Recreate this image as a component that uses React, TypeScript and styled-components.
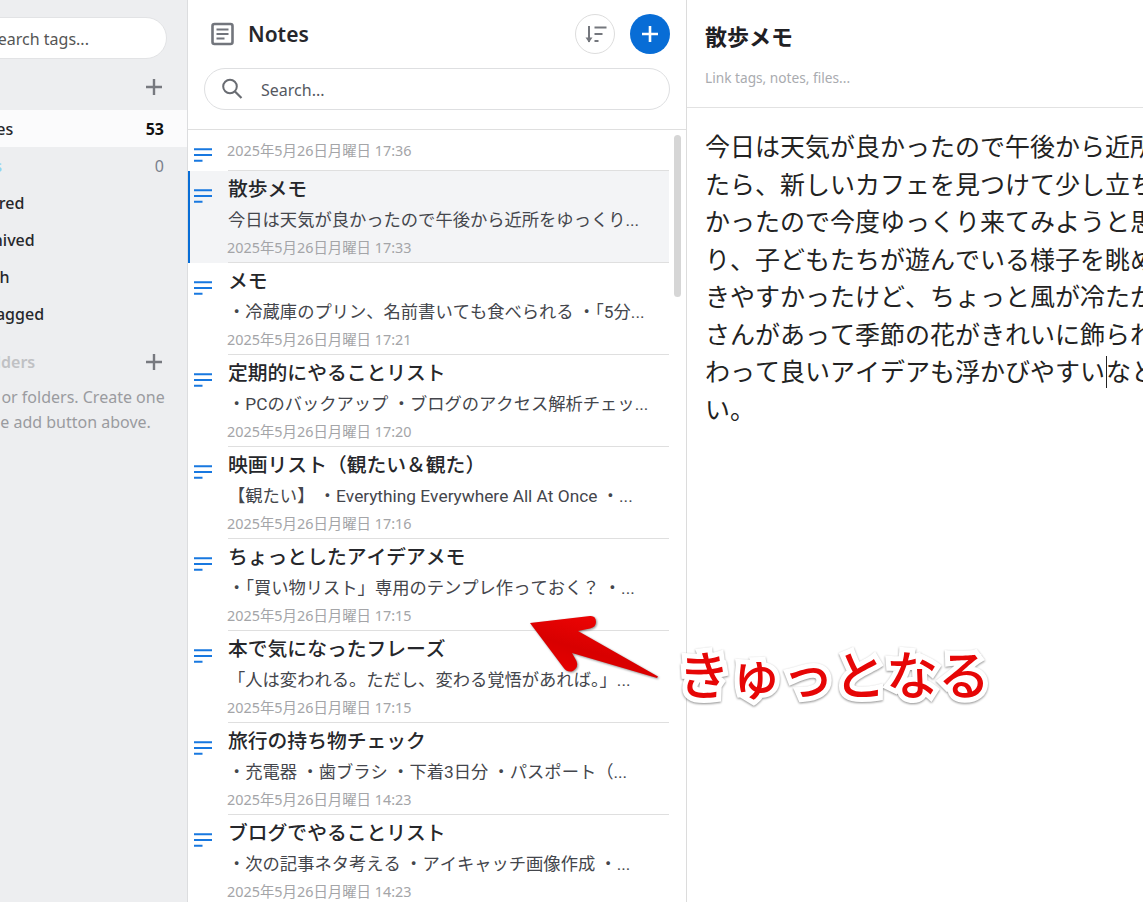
import React from 'react';
import styled, { createGlobalStyle } from 'styled-components';

const FONT = `"Noto Sans", "Noto Sans CJK JP", sans-serif`;

const Global = createGlobalStyle`
  html, body { margin: 0; padding: 0; height: 100%; overflow: hidden; background: #fff; }
  body { font-family: ${FONT}; color: #222; }
  #root { height: 100%; }
`;

const Shell = styled.div`
  position: relative;
  display: flex;
  width: 1143px;
  height: 902px;
  overflow: hidden;
`;

/* ---------- tags sidebar (its left part is cut off by the window) ---------- */
const Sidebar = styled.aside`
  flex: 0 0 188px;
  height: 100%;
  box-sizing: border-box;
  background: #edeef0;
  border-right: 1px solid #dcdddf;
  overflow: hidden;
`;
const SidebarInner = styled.div`
  width: 247px;
  margin-left: -60px;
  padding-top: 17px;
`;
const TagSearch = styled.div`
  box-sizing: border-box;
  width: 207px;
  height: 42px;
  margin-left: 20px;
  padding: 2px 0 0 28px;
  display: flex;
  align-items: center;
  background: #fff;
  border: 1px solid #e2e3e5;
  border-radius: 21px;
  font-size: 16px;
  color: #555;
`;
const SectionHead = styled.div<{ $top: number }>`
  display: flex;
  align-items: center;
  justify-content: space-between;
  height: 26px;
  margin-top: ${(p) => p.$top}px;
  padding: 0 24px 0 38px;
  font-size: 16px;
  font-weight: 600;
  color: #c0c1c4;
`;
const PlusOnly = styled(SectionHead)`
  justify-content: flex-end;
`;
const ViewRow = styled.div<{ $active?: boolean }>`
  display: flex;
  align-items: center;
  justify-content: space-between;
  height: 37px;
  padding: 0 23px 0 28px;
  font-size: 16px;
  font-weight: 500;
  color: #26272b;
  background: ${(p) => (p.$active ? '#fbfbfc' : 'transparent')};
`;
const ViewName = styled.span<{ $tint?: boolean }>`
  color: ${(p) => (p.$tint ? '#8fd3f4' : 'inherit')};
`;
const Count = styled.span<{ $strong?: boolean }>`
  font-weight: ${(p) => (p.$strong ? 700 : 400)};
  color: ${(p) => (p.$strong ? '#111' : '#7a808c')};
`;
const Views = styled.div`
  margin-top: 10px;
`;
const EmptyNote = styled.p`
  margin: 10px 0 0 -1px;
  font-size: 16px;
  line-height: 25px;
  color: #9a9b9f;
  white-space: nowrap;
`;

/* ---------- notes list ---------- */
const NotesColumn = styled.section`
  position: relative;
  flex: 0 0 499px;
  box-sizing: border-box;
  height: 100%;
  border-right: 1px solid #dcdcdc;
  overflow: hidden;
  background: #fff;
`;
const NotesHeader = styled.header`
  box-sizing: border-box;
  height: 130px;
  padding: 14px 16px 0 16px;
  border-bottom: 1px solid #dfdfdf;
`;
const HeaderTop = styled.div`
  display: flex;
  align-items: center;
  height: 40px;
`;
const HeaderIcon = styled.svg`
  width: 24px;
  height: 24px;
  margin-left: 6px;
  flex: none;
`;
const HeaderTitle = styled.h1`
  flex: 1;
  margin: 0 0 0 14px;
  font-size: 21px;
  font-weight: 600;
  color: #26272b;
`;
const RoundButton = styled.button<{ $primary?: boolean }>`
  box-sizing: border-box;
  width: 40px;
  height: 40px;
  padding: 0;
  margin-left: 15px;
  display: flex;
  align-items: center;
  justify-content: center;
  border-radius: 50%;
  border: ${(p) => (p.$primary ? 'none' : '1px solid #dddddd')};
  background: ${(p) => (p.$primary ? '#086dd6' : '#fff')};
`;
const SearchBox = styled.div`
  box-sizing: border-box;
  display: flex;
  align-items: center;
  height: 42px;
  margin-top: 14px;
  padding: 2px 0 0 15px;
  border: 1px solid #dedfe1;
  border-radius: 21px;
  font-size: 16px;
  color: #55585f;
`;
const SearchGlyph = styled.svg`
  width: 24px;
  height: 24px;
  margin: -2px 17px 0 0;
`;
const List = styled.div`
  padding-right: 17px;
`;
const NoteRow = styled.article<{ $selected?: boolean }>`
  display: flex;
  background: ${(p) => (p.$selected ? '#f3f4f6' : 'transparent')};
  box-shadow: ${(p) => (p.$selected ? 'inset 2px 0 0 #086dd6' : 'none')};
`;
const NoteGlyph = styled.svg`
  flex: 0 0 18px;
  width: 18px;
  height: 14px;
  margin: 18px 16px 0 6px;
`;
const NoteBody = styled.div<{ $compact?: boolean }>`
  flex: 1;
  min-width: 0;
  box-sizing: border-box;
  height: ${(p) => (p.$compact ? 41 : 92)}px;
  padding-top: ${(p) => (p.$compact ? 11 : 4)}px;
  border-bottom: 1px solid #dfdfdf;
`;
const NoteTitle = styled.h2`
  margin: 0;
  font-size: 19.8px;
  line-height: 28px;
  font-weight: 500;
  font-kerning: none;
  color: #26272b;
  white-space: nowrap;
`;
const NotePreview = styled.p`
  margin: 5px 0 0;
  font-family: Roboto, "Noto Sans CJK JP", sans-serif;
  font-size: 17.3px;
  line-height: 25px;
  font-kerning: none;
  color: #44464c;
  white-space: nowrap;
  overflow: hidden;
`;
const NoteDate = styled.time`
  display: block;
  margin: 5px 0 0 -1px;
  font-size: 14.4px;
  line-height: 20px;
  color: #a4a5a8;
  white-space: nowrap;
`;
const CompactDate = styled(NoteDate)`
  margin-top: 0;
`;
const ScrollThumb = styled.div`
  position: absolute;
  left: 486px;
  top: 135px;
  width: 7px;
  height: 162px;
  border-radius: 4px;
  background: #d6d6d6;
`;

/* ---------- editor ---------- */
const Editor = styled.main`
  flex: 1;
  min-width: 0;
  height: 100%;
  overflow: hidden;
  background: #fff;
`;
const EditorHeader = styled.header`
  box-sizing: border-box;
  height: 108px;
  padding: 21px 18px 0;
  border-bottom: 1px solid #e2e2e2;
`;
const EditorTitle = styled.h2`
  margin: 0;
  font-size: 22px;
  line-height: 30px;
  font-weight: 700;
  font-kerning: none;
  color: #1f2024;
`;
const LinkHint = styled.div`
  margin-top: 17px;
  font-size: 13.7px;
  line-height: 20px;
  color: #a9abaf;
`;
const EditorText = styled.div`
  padding: 20px 18px 0;
  font-size: 25px;
  line-height: 37.5px;
  font-kerning: none;
  color: #222;
`;
const TextLine = styled.div`
  white-space: nowrap;
`;
const Caret = styled.span`
  display: inline-block;
  width: 0;
  height: 32px;
  margin: 0 -1px 0 1px;
  border-left: 1px solid #222;
  vertical-align: -7px;
`;

/* ---------- annotation over the screenshot ---------- */
const ArrowMark = styled.svg`
  position: absolute;
  left: 520px;
  top: 605px;
  width: 150px;
  height: 85px;
  filter: drop-shadow(1px 1px 1px rgba(0, 0, 0, 0.45));
`;
const Callout = styled.div`
  position: absolute;
  left: 678px;
  top: 638px;
  font-size: 52px;
  line-height: 74px;
  font-weight: 500;
  font-kerning: none;
  white-space: nowrap;
  color: #e60606;
  -webkit-text-stroke: 10px #fff;
  paint-order: stroke fill;
  filter: drop-shadow(0 1px 1px rgba(0, 0, 0, 0.45));
`;

const PlusGlyph = ({ color, size, weight }: { color: string; size: number; weight: number }) => (
  <svg width={size} height={size} viewBox="0 0 18 18" fill="none" aria-hidden="true">
    <path d="M9 1v16M1 9h16" stroke={color} strokeWidth={weight} />
  </svg>
);

const LinesIcon = () => (
  <NoteGlyph viewBox="0 0 18 14" fill="none" aria-hidden="true">
    <path d="M0 1.200h18M0 7h18M0 12.800h8.500" stroke="#1878e0" strokeWidth="2" />
  </NoteGlyph>
);

const notes = [
  { title: '散歩メモ', preview: '今日は天気が良かったので午後から近所をゆっくり...', date: '2025年5月26日月曜日 17:33', selected: true },
  { title: 'メモ', preview: '・冷蔵庫のプリン、名前書いても食べられる ・「5分...', date: '2025年5月26日月曜日 17:21' },
  { title: '定期的にやることリスト', preview: '・PCのバックアップ ・ブログのアクセス解析チェッ...', date: '2025年5月26日月曜日 17:20' },
  { title: '映画リスト（観たい＆観た）', preview: '【観たい】 ・Everything Everywhere All At Once ・...', date: '2025年5月26日月曜日 17:16' },
  { title: 'ちょっとしたアイデアメモ', preview: '・「買い物リスト」専用のテンプレ作っておく？ ・...', date: '2025年5月26日月曜日 17:15' },
  { title: '本で気になったフレーズ', preview: '「人は変われる。ただし、変わる覚悟があれば。」...', date: '2025年5月26日月曜日 17:15' },
  { title: '旅行の持ち物チェック', preview: '・充電器 ・歯ブラシ ・下着3日分 ・パスポート（...', date: '2025年5月26日月曜日 14:23' },
  { title: 'ブログでやることリスト', preview: '・次の記事ネタ考える ・アイキャッチ画像作成 ・...', date: '2025年5月26日月曜日 14:23' },
];

const views = [
  { name: 'Notes', count: '53', active: true },
  { name: 'Files', count: '0', tint: true },
  { name: 'Starred' },
  { name: 'Archived' },
  { name: 'Trash' },
  { name: 'Untagged' },
];

export default function App() {
  return (
    <Shell lang="ja">
      <Global />
      <Sidebar>
        <SidebarInner>
          <TagSearch>Search tags...</TagSearch>
          <PlusOnly $top={15}>
            <PlusGlyph color="#77797f" size={18} weight={2.4} />
          </PlusOnly>
          <Views>
            {views.map((v) => (
              <ViewRow key={v.name} $active={v.active}>
                <ViewName $tint={v.tint}>{v.name}</ViewName>
                {v.count && <Count $strong={v.active}>{v.count}</Count>}
              </ViewRow>
            ))}
          </Views>
          <SectionHead $top={17}>
            <span>Folders</span>
            <PlusGlyph color="#77797f" size={18} weight={2.4} />
          </SectionHead>
          <EmptyNote>
            No tags or folders. Create one
            <br />
            using the add button above.
          </EmptyNote>
        </SidebarInner>
      </Sidebar>

      <NotesColumn>
        <NotesHeader>
          <HeaderTop>
            <HeaderIcon viewBox="0 0 24 24" fill="none" aria-hidden="true">
              <rect x="2.500" y="2" width="20" height="20" rx="2" stroke="#72757c" strokeWidth="2.600" />
              <path d="M6.500 7.500h12M6.500 12h12M6.500 16.500h8" stroke="#72757c" strokeWidth="2" />
            </HeaderIcon>
            <HeaderTitle>Notes</HeaderTitle>
            <RoundButton aria-label="Sort">
              <svg width="24" height="24" viewBox="0 0 24 24" fill="none" aria-hidden="true">
                <path d="M6 4v16" stroke="#74777d" strokeWidth="2" />
                <path d="M2.500 15.500 6 20.500l3.500-5z" fill="#74777d" />
                <path d="M11.500 5.500h12M11.500 12h8M11.500 19h4" stroke="#74777d" strokeWidth="2" />
              </svg>
            </RoundButton>
            <RoundButton $primary aria-label="Add note">
              <PlusGlyph color="#fff" size={18} weight={2.6} />
            </RoundButton>
          </HeaderTop>
          <SearchBox>
            <SearchGlyph viewBox="0 0 24 24" fill="none" aria-hidden="true">
              <circle cx="10" cy="9.500" r="6.800" stroke="#696c72" strokeWidth="2" />
              <path d="m15 14.500 6.500 6.500" stroke="#696c72" strokeWidth="2.200" />
            </SearchGlyph>
            Search...
          </SearchBox>
        </NotesHeader>
        <List>
          <NoteRow>
            <LinesIcon />
            <NoteBody $compact>
              <CompactDate>2025年5月26日月曜日 17:36</CompactDate>
            </NoteBody>
          </NoteRow>
          {notes.map((n) => (
            <NoteRow key={n.title} $selected={n.selected}>
              <LinesIcon />
              <NoteBody>
                <NoteTitle>{n.title}</NoteTitle>
                <NotePreview>{n.preview}</NotePreview>
                <NoteDate>{n.date}</NoteDate>
              </NoteBody>
            </NoteRow>
          ))}
        </List>
        <ScrollThumb />
      </NotesColumn>

      <Editor>
        <EditorHeader>
          <EditorTitle>散歩メモ</EditorTitle>
          <LinkHint>Link tags, notes, files...</LinkHint>
        </EditorHeader>
        <EditorText>
          <TextLine>今日は天気が良かったので午後から近所をゆっくり</TextLine>
          <TextLine>たら、新しいカフェを見つけて少し立ち寄ってみた</TextLine>
          <TextLine>かったので今度ゆっくり来てみようと思った。公園</TextLine>
          <TextLine>り、子どもたちが遊んでいる様子を眺めながら歩く</TextLine>
          <TextLine>きやすかったけど、ちょっと風が冷たかった。お花</TextLine>
          <TextLine>さんがあって季節の花がきれいに飾られていて</TextLine>
          <TextLine>わって良いアイデアも浮かびやすい<Caret />なと思う。</TextLine>
          <TextLine>い。</TextLine>
        </EditorText>
      </Editor>

      <ArrowMark viewBox="0 0 150 85" aria-hidden="true">
        <defs>
          <linearGradient id="arrowFill" x1="0.15" y1="1" x2="0.75" y2="0">
            <stop offset="0" stopColor="#ec0000" />
            <stop offset="0.45" stopColor="#d80000" />
            <stop offset="1" stopColor="#f20505" />
          </linearGradient>
        </defs>
        <path
          d="M10 18 70 11Q76 10.500 76 17 76 22 70 23.500L58 26 138 71.500 137 73 52 48 56.500 56Q59 62 53 66 47 68 43 62Z"
          fill="url(#arrowFill)"
        />
      </ArrowMark>
      <Callout>きゅっとなる</Callout>
    </Shell>
  );
}
